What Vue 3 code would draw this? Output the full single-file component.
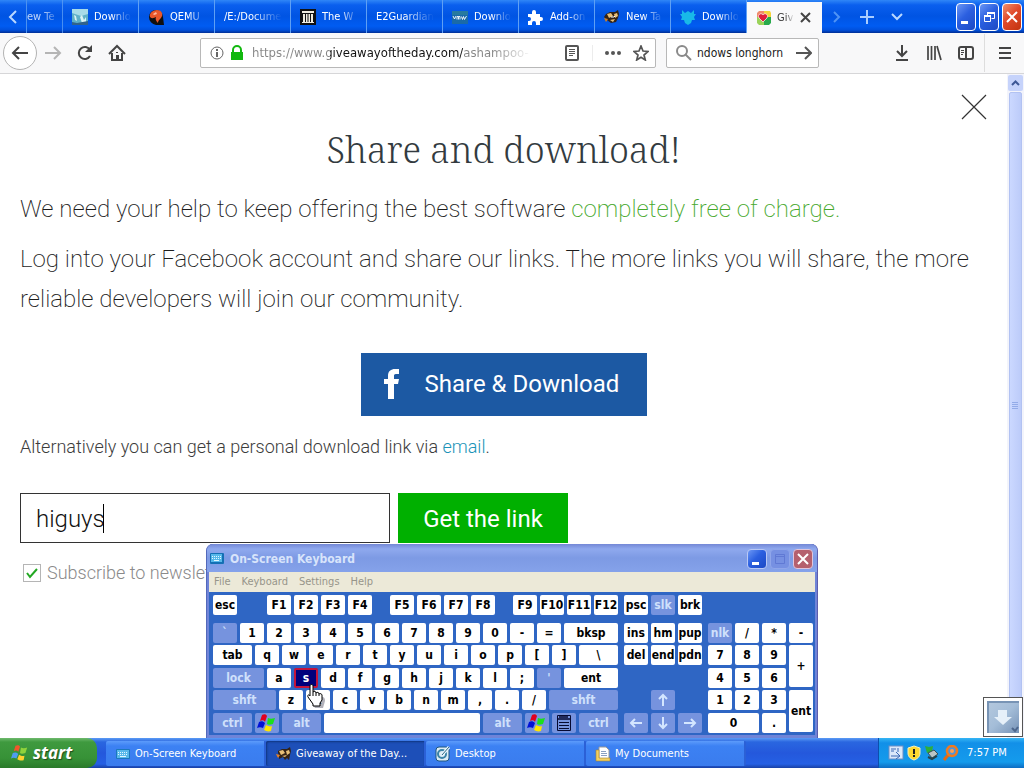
<script setup>
import { ref } from 'vue'

const tabs = [
  { label: 'Downlo', icon: 'photo' },
  { label: 'QEMU', icon: 'qemu' },
  { label: '/E:/Docume' },
  { label: 'The W', icon: 'archive' },
  { label: 'E2Guardian' },
  { label: 'Downlo', icon: 'vmw' },
  { label: 'Add-on', icon: 'puzzle' },
  { label: 'New Ta', icon: 'fox' },
  { label: 'Downlo', icon: 'splat' },
]

const url = ref('https://www.giveawayoftheday.com/ashampoo-')
const search = ref('ndows longhorn')
const email = ref('higuys')
const subscribed = ref(true)

const plain = (s) => s.split(' ').map((t) => ({ t }))
const gap = (w) => ({ gap: w })
const mainRows = [
  [{ t: 'esc' }, gap('g1'), ...plain('F1 F2 F3 F4'), gap('g2'), ...plain('F5 F6 F7 F8'), gap('g2'), ...plain('F9 F10 F11 F12')],
  [{ t: '`', dim: true }, ...plain('1 2 3 4 5 6 7 8 9 0 - ='), { t: 'bksp', w: 'grow' }],
  [{ t: 'tab', w: 'w39' }, ...plain('q w e r t y u i o p [ ]'), { t: '\\', w: 'grow' }],
  [{ t: 'lock', w: 'w51', dim: true }, { t: 'a' }, { t: 's', hot: true }, ...plain('d f g h j k l ;'), { t: "'", dim: true }, { t: 'ent', w: 'grow' }],
  [{ t: 'shft', w: 'w63', dim: true }, ...plain('z x c v b n m , . /'), { t: 'shft', w: 'grow', dim: true }],
  [
    { t: 'ctrl', w: 'w39', dim: true }, { i: 'win', dim: true }, { t: 'alt', w: 'w39', dim: true },
    { w: 'grow', t: '' },
    { t: 'alt', w: 'w39', dim: true }, { i: 'win', dim: true }, { i: 'menu', dim: true }, { t: 'ctrl', w: 'w39', dim: true },
  ],
]
const navRows = [
  [{ t: 'psc' }, { t: 'slk', dim: true }, { t: 'brk' }],
  plain('ins hm pup'),
  plain('del end pdn'),
  [],
  [gap('g1'), { i: 'up', dim: true }],
  [{ i: 'left', dim: true }, { i: 'down', dim: true }, { i: 'right', dim: true }],
]
const padKeys = [
  { t: 'nlk', dim: true }, ...plain('/ * -'),
  ...plain('7 8 9'), { t: '+', c: 'tall plus' },
  ...plain('4 5 6'),
  ...plain('1 2 3'), { t: 'ent', c: 'tall enter' },
  { t: '0', c: 'double' }, { t: '.' },
]
const arrows = {
  up: 'M8 14V3M4 7l4-4 4 4',
  down: 'M8 2v11M4 9l4 4 4-4',
  left: 'M14 8H3M7 4L3 8l4 4',
  right: 'M2 8h11M9 4l4 4-4 4',
}
const menus = ['File', 'Keyboard', 'Settings', 'Help']
</script>

<template>
  <div class="screen">
    <header class="tabstrip">
      <button class="strip-btn scroll-left" aria-label="Scroll tabs left">
        <svg width="10" height="14" viewBox="0 0 10 14"><path d="M8 1L2 7l6 6" fill="none" stroke="#b9d8ff" stroke-width="2" /></svg>
      </button>
      <button class="tab partial"><span class="tab-label">ew Te</span></button>
      <button v-for="(tab, n) in tabs" :key="n" class="tab">
        <svg v-if="tab.icon" class="fav" width="16" height="16" viewBox="0 0 16 16">
          <g v-if="tab.icon === 'photo'">
            <path d="M0 0h16v16H0z" fill="#5fb0c8" /><path d="M0 0h16v5L9 7 0 4z" fill="#a7dbe8" />
            <path d="M2 6l2 1 1 5-2-1zM8 8l2-2 2 5 2-3v5l-4 1z" fill="#d9f3f5" /><path d="M0 13l5 1 11-2v4H0z" fill="#31628a" />
          </g>
          <g v-else-if="tab.icon === 'qemu'">
            <path d="M1 8a7 7 0 0 1 14 0l1 8H8a8 8 0 0 1-7-8z" fill="#101010" />
            <path d="M2 8C1 4 5 1 9 1s6 3 5 6-4 4-4 7c-2-2-3-4-2-6-2 1-4 2-6 0z" fill="#e8572a" />
            <path d="M5 5l3-2 1 2-3 1z" fill="#ffb9a0" />
          </g>
          <g v-else-if="tab.icon === 'archive'">
            <path d="M0 0h16v16H0z" fill="#111" />
            <path d="M2 2h12v2H2zM3 5h2v8H3zM6 5h1.500v8H6zM8.500 5H10v8H8.500zM11 5h2v8h-2zM2 13h12v1H2z" fill="#f0ece0" />
          </g>
          <g v-else-if="tab.icon === 'vmw'">
            <path d="M0 2h16v13H0z" fill="#1a6aa8" /><path d="M0 2h16v4H0z" fill="#277a9f" />
            <path d="M1 7l1.500 3L4 7M5 10.500V7.500h1.500v3M6.500 7.500H8v3M9.500 7.500l1 3 1-3 1 3 2-3.500" fill="none" stroke="#fff" stroke-width=".9" />
          </g>
          <path v-else-if="tab.icon === 'puzzle'" d="M0 5h4V3a2 2 0 1 1 4 0v2h4v3h1a2 2 0 1 1 0 4h-1v4H8v-2a2 2 0 0 0-4 0v2H0v-4h1a2 2 0 0 0 0-4H0z" fill="#fff" />
          <g v-else-if="tab.icon === 'fox'">
            <path d="M2 5l4-2 5 0 3-2 1 4-1 4-2 4-5 1-4-3-3-3z" fill="#332216" />
            <path d="M3 5l4-1 2 3-4 2zM10 5l3-1 1 3-3 2zM6 11l5-1-2 3z" fill="#e9c078" /><path d="M7 8h3l1-1" stroke="#fff" fill="none" />
            <path d="M0 9l4 1-2 3z" fill="#d98120" />
          </g>
          <path v-else d="M2 1l3 3 3-2 3 2 3-3v4h2l-2 3 1 3-3 0-1 3-3 2-3-2-1-3-3 0 1-3-2-3h2z" fill="#18b9e8" />
        </svg>
        <span class="tab-label">{{ tab.label }}</span>
      </button>
      <div class="tab active">
        <svg class="fav" width="16" height="16" viewBox="0 0 16 16">
          <path d="M1 3l2-2h5v6H1z" fill="#f08a6c" /><path d="M8 1h6l1 2v5H8z" fill="#f7d23b" />
          <path d="M8 7h7v6l-2 2H8z" fill="#29a94c" /><path d="M1 7h7v8H3l-2-2z" fill="#9bd35a" />
          <path d="M7 12L3 8c-2-3 2-6 4-3 2-3 6 0 4 3z" fill="#e01c3c" stroke="#fff" stroke-width=".7" />
        </svg>
        <span class="tab-label">Giv</span>
        <button class="tab-close" aria-label="Close tab">
          <svg width="11" height="11" viewBox="0 0 11 11"><path d="M1 1l9 9M10 1l-9 9" stroke="#444" stroke-width="2" /></svg>
        </button>
      </div>
      <button class="strip-btn" aria-label="Scroll tabs right">
        <svg width="10" height="14" viewBox="0 0 10 14"><path d="M2 2l5 5-5 5" fill="none" stroke="#4e93f5" stroke-width="2" /></svg>
      </button>
      <button class="strip-btn" aria-label="New tab">
        <svg width="14" height="14" viewBox="0 0 14 14"><path d="M7 0v14M0 7h14" stroke="#a9cdff" stroke-width="2" /></svg>
      </button>
      <button class="strip-btn" aria-label="List all tabs">
        <svg width="14" height="14" viewBox="0 0 14 14"><path d="M2 4l5 5 5-5" fill="none" stroke="#b9d8ff" stroke-width="2" /></svg>
      </button>
      <div class="win-btns">
        <button class="wbtn" aria-label="Minimize"><svg width="18" height="24" viewBox="0 0 18 24"><path d="M4 16h7v3H4z" fill="#fff" /></svg></button>
        <button class="wbtn" aria-label="Restore">
          <svg width="18" height="24" viewBox="0 0 18 24"><path d="M7.500 10V7.500h7v6h-3M4.500 10.500h6v6h-6z" fill="none" stroke="#fff" /><path d="M7 7h8v2H7zM4 10h7v2H4z" fill="#fff" /></svg>
        </button>
        <button class="wbtn red" aria-label="Close"><svg width="18" height="24" viewBox="0 0 18 24"><path d="M4 7l10 10M14 7L4 17" stroke="#fff" stroke-width="2" /></svg></button>
      </div>
    </header>

    <nav class="toolbar">
      <button class="back" aria-label="Back">
        <svg width="18" height="16" viewBox="0 0 18 16"><path d="M17 8H2M8 2L2 8l6 6" fill="none" stroke="#444" stroke-width="2" /></svg>
      </button>
      <button class="tool fwd" aria-label="Forward">
        <svg width="18" height="16" viewBox="0 0 18 16"><path d="M1 8h15M10 2l6 6-6 6" fill="none" stroke="#b5b5b5" stroke-width="2" /></svg>
      </button>
      <button class="tool" aria-label="Reload">
        <svg width="16" height="16" viewBox="0 0 16 16"><path d="M13 5a6 6 0 1 0 0 6" fill="none" stroke="#444" stroke-width="2" /><path d="M15 0v7H8z" fill="#444" /></svg>
      </button>
      <button class="tool" aria-label="Home">
        <svg width="18" height="18" viewBox="0 0 18 18"><path d="M1 10l8-8 8 8" fill="none" stroke="#444" stroke-width="2" /><path d="M4 9v7h10V9" fill="none" stroke="#444" stroke-width="2" /><path d="M8 11h3v5H8z" fill="#444" /><path d="M8 8h2v1H8z" fill="#444" /></svg>
      </button>
      <div class="urlbar">
        <svg width="14" height="14" viewBox="0 0 14 14"><circle cx="7" cy="7" r="6" fill="none" stroke="#666" /><path d="M6 6h2v5H6zM6 3h2v2H6z" fill="#666" /></svg>
        <svg width="14" height="16" viewBox="0 0 14 16"><path d="M3 8V5a4 4 0 0 1 8 0v3" fill="none" stroke="#12b80f" stroke-width="2" /><path d="M1 7h12v8H1z" fill="#12b80f" /></svg>
        <input v-model="url" class="url" type="text" aria-label="Address" />
        <button class="mini reader" aria-label="Reader view">
          <svg width="14" height="16" viewBox="0 0 14 16"><rect x="1" y="1" width="12" height="14" rx="1" fill="none" stroke="#555" stroke-width="2" /><path d="M4 4.500h6M4 6.500h6M4 8.500h6M4 10.500h4" stroke="#555" /></svg>
        </button>
        <button class="mini dots" aria-label="Page actions">
          <svg width="18" height="6" viewBox="0 0 18 6"><circle cx="3" cy="3" r="2" fill="#555" /><circle cx="9" cy="3" r="2" fill="#555" /><circle cx="15" cy="3" r="2" fill="#555" /></svg>
        </button>
        <button class="mini" aria-label="Bookmark">
          <svg width="16" height="16" viewBox="0 0 16 16"><path d="M8 1l2 5 5 .5-4 3.500 1.300 5L8 12.300 3.700 15 5 10 1 6.500 6 6z" fill="none" stroke="#555" stroke-width="1.700" /></svg>
        </button>
      </div>
      <div class="searchbar">
        <svg width="18" height="18" viewBox="0 0 18 18"><circle cx="7" cy="7" r="5" fill="none" stroke="#8a8a8a" stroke-width="2" /><path d="M10 10l6 6" stroke="#8a8a8a" stroke-width="2" /></svg>
        <input v-model="search" class="query" type="text" aria-label="Search" />
        <button class="mini" aria-label="Go">
          <svg width="16" height="14" viewBox="0 0 16 14"><path d="M0 7h15M9 1l6 6-6 6" fill="none" stroke="#555" stroke-width="2" /></svg>
        </button>
      </div>
      <div class="right-tools">
        <button class="tool" aria-label="Downloads">
          <svg width="16" height="18" viewBox="0 0 16 18"><path d="M8 1v11M3 7l5 5 5-5M2 16h12" fill="none" stroke="#444" stroke-width="2" /></svg>
        </button>
        <button class="tool" aria-label="Library">
          <svg width="16" height="16" viewBox="0 0 16 16"><path d="M2 1v14M5.500 1v14M9 1v14M11 1l4 14" fill="none" stroke="#444" stroke-width="1.700" /></svg>
        </button>
        <button class="tool" aria-label="Sidebars">
          <svg width="16" height="16" viewBox="0 0 16 16"><rect x="1" y="2" width="14" height="12" rx="2" fill="none" stroke="#444" stroke-width="2" /><path d="M8 2v12" stroke="#444" stroke-width="2" /><path d="M3 5.500h3M3 7.500h3M3 9.500h2" stroke="#444" /></svg>
        </button>
        <button class="tool burger" aria-label="Menu">
          <svg width="12" height="14" viewBox="0 0 12 14"><path d="M0 2h12M0 7h12M0 12h12" stroke="#444" stroke-width="2" /></svg>
        </button>
      </div>
    </nav>

    <div class="viewport">
      <main class="page">
        <button class="page-close" aria-label="Close">
          <svg width="26" height="26" viewBox="0 0 26 26"><path d="M1 1l24 24M25 1L1 25" stroke="#333" stroke-width="1.200" /></svg>
        </button>
        <h1>Share and download!</h1>
        <p>We need your help to keep offering the best software <span class="green">completely free of charge.</span></p>
        <p>Log into your Facebook account and share our links. The more links you will share, the more reliable developers will join our community.</p>
        <button class="share">
          <svg width="16" height="30" viewBox="0 0 16 30"><path d="M4 30V15H0v-5h4V7c0-5 3-7 7-7h4v5h-3c-2 0-2 1-2 2v3h5l-1 5h-4v15z" fill="#fff" /></svg>
          <span>Share &amp; Download</span>
        </button>
        <p class="alt">Alternatively you can get a personal download link via <a href="#email">email</a>.</p>
        <form class="link-form" @submit.prevent>
          <div class="field"><input v-model="email" type="text" aria-label="Email" /><i class="caret"></i></div>
          <button class="get">Get the link</button>
        </form>
        <label class="sub">
          <span class="box"><input v-model="subscribed" type="checkbox" />
            <svg v-if="subscribed" width="14" height="12" viewBox="0 0 14 12"><path d="M2 6l3 4 7-8" fill="none" stroke="#22a822" stroke-width="2" /></svg>
          </span>
          Subscribe to newslet
        </label>
      </main>
      <aside class="scrollbar">
        <button class="sb-btn" aria-label="Scroll up"><svg width="9" height="7" viewBox="0 0 9 7"><path d="M1 5l3.500-3.500L8 5" fill="none" stroke="#3d5795" stroke-width="2" /></svg></button>
        <div class="thumb"><svg width="7" height="8" viewBox="0 0 7 8"><path d="M0 .5h6M0 2.500h6M0 4.500h6M0 6.500h6" stroke="#93abe8" /></svg></div>
        <button class="sb-btn" aria-label="Scroll down"><svg width="9" height="7" viewBox="0 0 9 7"><path d="M1 2l3.500 3.500L8 2" fill="none" stroke="#3d5795" stroke-width="2" /></svg></button>
      </aside>
      <button class="corner" aria-label="Scroll to bottom">
        <svg width="32" height="32" viewBox="0 0 32 32">
          <defs><linearGradient id="steel" x2="1" y2="1"><stop stop-color="#b5c9de" /><stop offset=".5" stop-color="#a4bdd8" /><stop offset="1" stop-color="#7592b6" /></linearGradient></defs>
          <path d="M0 0h32v32H0z" fill="url(#steel)" /><path d="M0 0h32v2H2v30H0z" fill="#7894b5" />
          <path d="M11 9h9v7h5l-9 8-9-8h4z" fill="#e6f0f9" /><path d="M25 27l3 3 3-4" fill="none" stroke="#4d668c" stroke-width="2" />
        </svg>
      </button>
    </div>

    <section class="osk" aria-label="On-Screen Keyboard">
      <div class="osk-title">
        <svg width="14" height="11" viewBox="0 0 14 11"><rect width="14" height="11" rx="1" fill="#1470b4" /><rect x="1" y="1" width="11" height="8" fill="#58b8ea" /><path d="M2 3.500h9M2 5.500h9" stroke="#e0f8ff" stroke-dasharray="1 1" /><path d="M4 7.500h5" stroke="#e0f8ff" /></svg>
        <span>On-Screen Keyboard</span>
        <div class="osk-btns">
          <button class="wbtn" aria-label="Minimize keyboard"><svg width="18" height="18" viewBox="0 0 18 18"><path d="M4 12h7v3H4z" fill="#fff" /></svg></button>
          <button class="wbtn off" aria-label="Maximize keyboard" disabled><svg width="18" height="18" viewBox="0 0 18 18"><path d="M4.500 4.500h9v9h-9zM4 6.500h10" fill="none" stroke="#6079d4" /></svg></button>
          <button class="wbtn rose" aria-label="Close keyboard"><svg width="18" height="18" viewBox="0 0 18 18"><path d="M4 4l10 10M14 4L4 14" stroke="#fff" stroke-width="2" /></svg></button>
        </div>
      </div>
      <div class="osk-menu"><button v-for="m in menus" :key="m">{{ m }}</button></div>
      <div class="keys">
        <div class="rows main-keys">
          <div v-for="(row, r) in mainRows" :key="r" class="row">
            <template v-for="(k, n) in row" :key="n">
              <span v-if="k.gap" :class="k.gap"></span>
              <button v-else class="key" :class="[k.w, { dim: k.dim, hot: k.hot }]" :aria-label="k.t || k.i || 'space'">
                <svg v-if="k.i === 'win'" width="20" height="18" viewBox="0 0 20 18">
                  <path d="M5 1c2-1 4-1 5 1L8 8C7 6 5 6 3 7z" fill="#e00020" /><path d="M11 4c2 1 4 1 7 0l-2 6c-3 1-5 1-6 0z" fill="#1be01b" />
                  <path d="M2 8c2-1 4-1 6 1l-2 5c-2-1-4-1-6 0z" fill="#0010d8" /><path d="M9 11c2 1 4 2 6 1l-1 5c-3 1-5 0-7-1z" fill="#ffe600" />
                </svg>
                <svg v-else-if="k.i" width="16" height="18" viewBox="0 0 16 18"><path d="M1.500 1.500h13v15h-13z" fill="none" stroke="#060a30" /><path d="M1 5h14M3 3h9" stroke="#060a30" stroke-width="1.500" /><path d="M3 8.500h10M3 11.500h10M3 14.500h10" stroke="#060a30" /></svg>
                <template v-else>{{ k.t }}</template>
              </button>
            </template>
          </div>
        </div>
        <div class="rows nav-keys">
          <div v-for="(row, r) in navRows" :key="r" class="row">
            <template v-for="(k, n) in row" :key="n">
              <span v-if="k.gap" :class="k.gap"></span>
              <button v-else class="key" :class="{ dim: k.dim }" :aria-label="k.t || k.i">
                <svg v-if="k.i" width="16" height="16" viewBox="0 0 16 16"><path :d="arrows[k.i]" fill="none" stroke="#d4e6ff" stroke-width="2" /></svg>
                <template v-else>{{ k.t }}</template>
              </button>
            </template>
          </div>
        </div>
        <div class="pad-keys">
          <button v-for="(k, n) in padKeys" :key="n" class="key" :class="[k.c, { dim: k.dim }]">{{ k.t }}</button>
        </div>
      </div>
      <svg class="hand" width="20" height="24" viewBox="0 0 20 24">
        <path d="M6 3c1 0 2 1 2 2v5l8 2c2 1 2 2 2 4l-2 7H8l-5-8c0-2 2-2 3 0z" fill="#667" opacity=".5" transform="translate(1 1)" />
        <path d="M4 2c0-2 3-2 3 0v6c1-1 3-1 3 1 1-1 3-1 3 1 1-1 3 0 3 1v5l-2 3v3H7v-2l-5-7c-1-2 1-3 2-1z" fill="#fff" stroke="#000" />
        <path d="M7 8v4M10 9v3M13 10v2" stroke="#000" />
      </svg>
    </section>

    <footer class="taskbar">
      <button class="start">
        <svg width="18" height="18" viewBox="0 0 20 18">
          <path d="M5 1c2-1 4-1 5 1L8 8C7 6 5 6 3 7z" fill="#f0562c" /><path d="M11 3c2 1 4 1 7 0l-2 6c-3 1-5 1-6 0z" fill="#8fd23c" />
          <path d="M2 9c2-1 4-1 6 1l-2 5c-2-1-4-1-6 0z" fill="#4f9df0" /><path d="M9 11c2 1 4 2 6 1l-1 5c-3 1-5 0-7-1z" fill="#ffd12e" />
        </svg>
        <span>start</span>
      </button>
      <button class="task">
        <svg width="16" height="16" viewBox="0 0 16 16"><rect x="1" y="3" width="14" height="10" rx="1" fill="#1b78bd" /><rect x="2" y="4" width="12" height="8" fill="#58b8ea" /><path d="M3 6.500h9M3 8.500h9" stroke="#e0f8ff" stroke-dasharray="1 1" /><path d="M5 10.500h6" stroke="#e0f8ff" /></svg>
        <span>On-Screen Keyboard</span>
      </button>
      <button class="task on">
        <svg width="16" height="16" viewBox="0 0 16 16"><path d="M2 5l4-2 5 0 3-2 1 4-1 4-1 5-2-2-2 2-2-3-4 2v-4l-1-2z" fill="#332216" /><path d="M3 5l4-1 2 3-4 2zM10 5l3-1 1 3-3 2zM6 10l5-1-2 2z" fill="#e9c078" /><path d="M0 8l4 1-2 3z" fill="#e98120" /></svg>
        <span>Giveaway of the Day...</span>
      </button>
      <button class="task">
        <svg width="16" height="16" viewBox="0 0 16 16"><rect x="1" y="1" width="13" height="14" rx="3" fill="#dcecf5" stroke="#1e5680" /><circle cx="7" cy="8" r="4" fill="none" stroke="#3b83a6" stroke-width="2" /><path d="M7 9l7-8" stroke="#e8f7ff" stroke-width="3" /><path d="M7 9l7-8" stroke="#31667f" /></svg>
        <span>Desktop</span>
      </button>
      <button class="task">
        <svg width="16" height="16" viewBox="0 0 16 16"><path d="M4 1h7l3 3v9H4z" fill="#fff" stroke="#999" /><path d="M1 4h3v8h11v3H1z" fill="#f2d063" stroke="#a8842a" stroke-width=".6" /><path d="M6 5.500h5M6 7.500h6M6 9.500h6" stroke="#8ba0c0" /></svg>
        <span>My Documents</span>
      </button>
      <div class="tray">
        <svg width="16" height="16" viewBox="0 0 16 16"><rect x="1" y="1" width="14" height="13" fill="#dbe8fa" stroke="#6d8ec5" /><path d="M3 4h5M3 6h3M10 3v4M3 11h8M8 7l4 4-4 3" stroke="#3b69b5" fill="none" /></svg>
        <svg width="14" height="16" viewBox="0 0 14 16"><path d="M7 1l6 2v5c0 4-3 6-6 7-3-1-6-3-6-7V3z" fill="#ffd930" stroke="#f5f0c0" /><path d="M6 4h2v5H6zM6 10h2v2H6z" fill="#222" /></svg>
        <svg width="16" height="16" viewBox="0 0 16 16"><path d="M1 1l4 1 4-1-1 6-5 1z" fill="#2fae3b" /><path d="M4 8l6-3 4 4-6 4z" fill="#b9c4c6" stroke="#395057" /><path d="M4 12l4 2 5-3" stroke="#24424c" stroke-width="2" fill="none" /></svg>
        <svg width="16" height="16" viewBox="0 0 16 16"><path d="M6 9l-5 6" stroke="#e06a18" stroke-width="3" /><circle cx="9" cy="6" r="5" fill="#4f95dc" stroke="#f07a20" stroke-width="2.500" /><circle cx="9" cy="6" r="2" fill="#ffa050" /></svg>
        <time>7:57 PM</time>
      </div>
    </footer>
  </div>
</template>

<style>
body { margin: 0; }
</style>

<style scoped>
* { box-sizing: border-box; }
button { border: 0; padding: 0; background: none; font: inherit; color: inherit; flex-shrink: 0; }
input { font: inherit; min-width: 0; outline: none; }
svg { display: block; flex-shrink: 0; }
.screen { position: relative; height: 100vh; display: flex; flex-direction: column; overflow: hidden; background: #fff; font: 11px/16px "DejaVu Sans Condensed", "DejaVu Sans", sans-serif; }

.tabstrip { display: flex; height: 33px; flex-shrink: 0; color: #fff; background: linear-gradient(#2f86f7 0, #0a5fee 5px, #0054e3 16px, #005cf2 26px, #0050dc 30px, #002e94 33px); }
.strip-btn { width: 30px; display: flex; align-items: center; justify-content: center; }
.scroll-left { width: 27px; border-right: 1px solid #4c92f0; }
.tab { display: flex; align-items: center; gap: 6px; width: 76px; padding: 0 5px 0 9px; border-right: 1px solid #5fa0f4; overflow: hidden; text-align: left; flex-shrink: 0; }
.tab.partial { width: 36px; padding: 0; opacity: .75; }
.tab-label { flex: 1; min-width: 0; overflow: hidden; white-space: nowrap; -webkit-mask-image: linear-gradient(90deg, #000 45%, transparent 95%); mask-image: linear-gradient(90deg, #000 45%, transparent 95%); }
.tab.active { width: 75px; gap: 5px; padding-right: 11px; margin-top: 2px; background: #f9f9fa; color: #333; border: 0; }
.win-btns { margin-left: auto; display: flex; align-items: center; gap: 3px; padding-right: 2px; }
.wbtn { display: flex; align-items: center; justify-content: center; width: 20px; height: 28px; border: 1px solid #fff; border-radius: 4px; background: linear-gradient(135deg, #6b97f5, #2b5fe0 45%, #1c49c4); }
.wbtn.red { background: linear-gradient(135deg, #f0906c, #e0492a 45%, #c2320f); }

.toolbar { display: flex; align-items: center; height: 41px; flex-shrink: 0; background: #f8f8f9; border-bottom: 1px solid #d6d6d8; padding-left: 3px; }
.back { width: 34px; height: 34px; border: 1px solid #b3b3b3; border-radius: 50%; background: #fff; display: flex; align-items: center; justify-content: center; }
.tool { width: 32px; height: 32px; display: flex; align-items: center; justify-content: center; }
.urlbar, .searchbar { display: flex; align-items: center; height: 30px; border: 1px solid #b8b8b8; border-radius: 2px; background: #fff; font-size: 12px; }
.urlbar { flex: 1; margin-left: 67px; padding: 0 6px 0 9px; gap: 6px; }
.url { flex: 1; margin-left: 2px; border: 0; padding: 0; font-size: 13px; color: transparent; background: linear-gradient(90deg, #858585 78px, #111 78px, #111 211px, #858585 211px, #858585 240px, #fff 280px); -webkit-background-clip: text; background-clip: text; }
.reader { padding-right: 13px; border-right: 1px solid #ececec; margin-right: 5px; }
.dots { margin-right: 5px; }
.searchbar { width: 153px; margin-left: 10px; padding: 0 6px 0 8px; gap: 4px; }
.query { flex: 1; width: 0; border: 0; padding: 0; color: #222; background: none; }
.right-tools { margin-left: 67px; display: flex; align-items: center; }
.burger { width: 40px; height: 38px; border-left: 1px solid #ddd; margin-left: 2px; }

.viewport { position: relative; flex: 1; display: flex; min-height: 0; }
.page { position: relative; flex: 1; min-width: 0; overflow: hidden; padding: 56px 20px 0; display: flex; flex-direction: column; font: 300 24px/40px Roboto, sans-serif; color: #3c3c3c; }
.page-close { position: absolute; top: 20px; right: 20px; }
h1 { margin: 0 0 19px; text-align: center; font: 300 36px/40px "Roboto Slab", "Noto Serif", "DejaVu Serif Condensed", serif; color: #333b40; }
p { margin: 0 0 10px; }
.page > p:not(.alt) { font-weight: 200; color: #1c1c1c; }
.page .green { color: #46a82c; }
.share { align-self: center; margin-top: 24px; height: 63px; width: 286px; display: flex; align-items: center; gap: 25px; padding: 0 0 2px 23px; background: #1c59a3; color: #fff; font-weight: 400; }
.alt { margin: 11px 0 26px; font-size: 18px; }
a { color: #1b94b8; text-decoration: none; }
.link-form { display: flex; gap: 8px; }
.field { position: relative; width: 370px; }
.field input { width: 100%; height: 50px; border: 1px solid #333; padding: 2px 15px 0; color: #111; background: #fff; }
.caret { position: absolute; left: 83px; top: 11px; width: 1px; height: 29px; background: #000; }
.get { width: 170px; height: 50px; padding-top: 2px; background: #00b000; color: #fff; font-weight: 400; }
.sub { display: flex; align-items: center; gap: 6px; margin: 10px 0 0 3px; font-size: 18px; color: #8a8a8a; }
.box { position: relative; width: 18px; height: 18px; }
.box input { appearance: none; display: block; width: 18px; height: 18px; margin: 0; border: 1px solid #b5b5b5; background: #fff; }
.box svg { position: absolute; left: 2px; top: 3px; }

.scrollbar { width: 17px; display: flex; flex-direction: column; gap: 1px; padding: 1px 0; background: #f3f4fb; }
.sb-btn { height: 16px; margin: 0 1px; border-radius: 2px; background: #c6d3fb; display: flex; align-items: center; justify-content: center; }
.thumb { flex: 1; margin: 0 2px; border-radius: 2px; border: 1px solid #b2c2f2; background: linear-gradient(90deg, #cbd8ff, #bccbf9); display: flex; align-items: center; justify-content: center; }
.corner { position: absolute; right: 1px; bottom: 1px; padding: 3px; border: 1px solid #555; background: #fff; }

.osk { position: absolute; left: 206px; bottom: 30px; width: 612px; padding: 0 3px 3px; border-radius: 7px 7px 0 0; background: #6f84d8; box-shadow: inset 1px 1px 0 #5368ba, inset -1px 0 0 #5d5dac; font-size: 11px; }
.osk-title { height: 28px; display: flex; align-items: center; gap: 6px; padding: 1px 2px 0 3px; color: #d8e4fb; font: bold 12px/16px "DejaVu Sans Condensed", sans-serif; margin: 0 -2px; border-radius: 6px 6px 0 0; background: linear-gradient(#7488d6, #8fa9ee 5px, #7d9ae4 14px, #85a2ea); }
.osk-btns { margin-left: auto; display: flex; gap: 3px; padding-right: 2px; }
.osk .wbtn { height: 20px; border-color: #b9c8f5; }
.osk .off { background: #7690e2; border-color: #90a6ea; }
.osk .rose { background: #b5606e; border-color: #dfc5dc; }
.osk-menu { height: 20px; display: flex; align-items: center; gap: 11px; padding-left: 5px; background: #ece9d8; color: #97958a; }
.keys { display: flex; gap: 6px; padding: 3px 2px 2px 4px; background: #2f66c4; }
.rows { display: grid; grid-template-rows: 28px 22px 23px 22px 23px 20px; }
.main-keys { width: 405px; }
.nav-keys { width: 78px; }
.pad-keys { display: grid; grid-template: 22px 23px 22px 23px 20px / repeat(4, 24px); column-gap: 3px; margin-top: 28px; }
.row { display: flex; gap: 3px; }
.key { width: 24px; height: 20px; border-radius: 2px; background: #fff; color: #000; font: bold 12px/20px "DejaVu Sans Condensed", sans-serif; display: flex; align-items: center; justify-content: center; white-space: nowrap; }
.key.dim { background: #7693de; color: #cfe0fb; }
.key.hot { background: #00007c; color: #fff; border: 2px solid #c3143c; }
.w39 { width: 39px; }
.w51 { width: 51px; }
.w63 { width: 63px; }
.grow { flex: 1; width: auto; }
.g1 { width: 24px; }
.g2 { width: 12px; }
.tall { height: 42px; }
.plus { grid-area: 2 / 4 / span 2; }
.enter { grid-area: 4 / 4 / span 2; }
.double { grid-column: span 2; width: auto; }
.hand { position: absolute; left: 100px; top: 140px; }

.taskbar { display: flex; height: 30px; flex-shrink: 0; color: #fff; background: linear-gradient(#5b9bf5 0, #2a66e0 4px, #2458dc 15px, #2560e4 26px, #1941a5 30px); }
.start { width: 97px; display: flex; align-items: center; gap: 4px; padding-left: 11px; border-radius: 0 10px 10px 0; background: linear-gradient(#6fba6d 0, #3f9a3f 4px, #379237 20px, #2a7a2a 30px); font: italic bold 18px/24px "Open Sans", sans-serif; font-size: 17px; text-shadow: 1px 1px 1px #1c4d1c; margin-right: 9px; }
.task { flex: 0 1 160px; min-width: 0; display: flex; align-items: center; gap: 4px; padding-left: 9px; margin: 3px 0 2px; border-radius: 2px; border-right: 2px solid #2b60d6; background: linear-gradient(#5c9bfb, #3c81f3 5px, #3a7cee); white-space: nowrap; overflow: hidden; }
.task.on { padding-left: 10px; background: #1d4fb8; box-shadow: inset 1px 1px 2px #10357f; }
.tray { margin-left: auto; width: 146px; display: flex; align-items: center; gap: 3px; padding-left: 9px; border-left: 1px solid #0c4fae; background: linear-gradient(#35b5f5 0, #1290e8 5px, #149bec 24px, #0d6cc2 30px); }
.tray time { margin-left: 5px; white-space: nowrap; }
</style>
